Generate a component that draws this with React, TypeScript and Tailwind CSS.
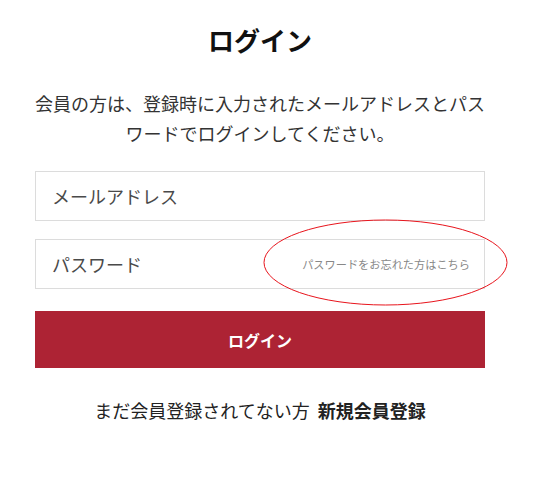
import React from "react";

export default function App() {
  return (
    <div className="relative w-[539px] h-[485px] bg-white font-['Noto_Sans_CJK_JP','Noto_Sans',sans-serif] overflow-hidden">
      <div className="ml-[35px] w-[450px] flex flex-col items-stretch">
        <h1 className="mt-[20px] h-[40px] leading-[40px] text-center text-[26px] font-bold text-[#111]">
          ログイン
        </h1>
        <p className="mt-[28px] -mx-[5px] text-center text-[18px] leading-[30px] text-[#333]">
          会員の方は、登録時に入力されたメールアドレスとパス
          <br />
          ワードでログインしてください。
        </p>
        <div className="mt-[23px] h-[50px] border border-[#dcdcdc] flex items-center">
          <input
            type="email"
            placeholder="メールアドレス"
            className="w-full h-full pl-[16px] pr-[16px] text-[18px] text-[#333] placeholder:text-[#4a4a4a] outline-none bg-transparent"
          />
        </div>
        <div className="mt-[18px] h-[50px] border border-[#dcdcdc] flex items-center">
          <input
            type="password"
            placeholder="パスワード"
            className="flex-1 min-w-0 h-full pl-[16px] text-[18px] text-[#333] placeholder:text-[#4a4a4a] outline-none bg-transparent"
          />
          <a className="pr-[14px] text-[11.2px] text-[#888] whitespace-nowrap">
            パスワードをお忘れた方はこちら
          </a>
        </div>
        <button className="mt-[22px] h-[57px] w-full bg-[#ad2334] text-white text-[16px] font-bold">
          ログイン
        </button>
        <p className="mt-[27px] text-center text-[18px] leading-[30px] text-[#222]">
          まだ会員登録されてない方<span className="ml-[8px] font-bold">新規会員登録</span>
        </p>
      </div>
      <svg
        className="absolute left-0 top-0 pointer-events-none"
        width="539"
        height="485"
      >
        <ellipse cx="385.5" cy="262.5" rx="121.5" ry="42.5" fill="none" stroke="#e8141c" strokeWidth="1" />
      </svg>
    </div>
  );
}
